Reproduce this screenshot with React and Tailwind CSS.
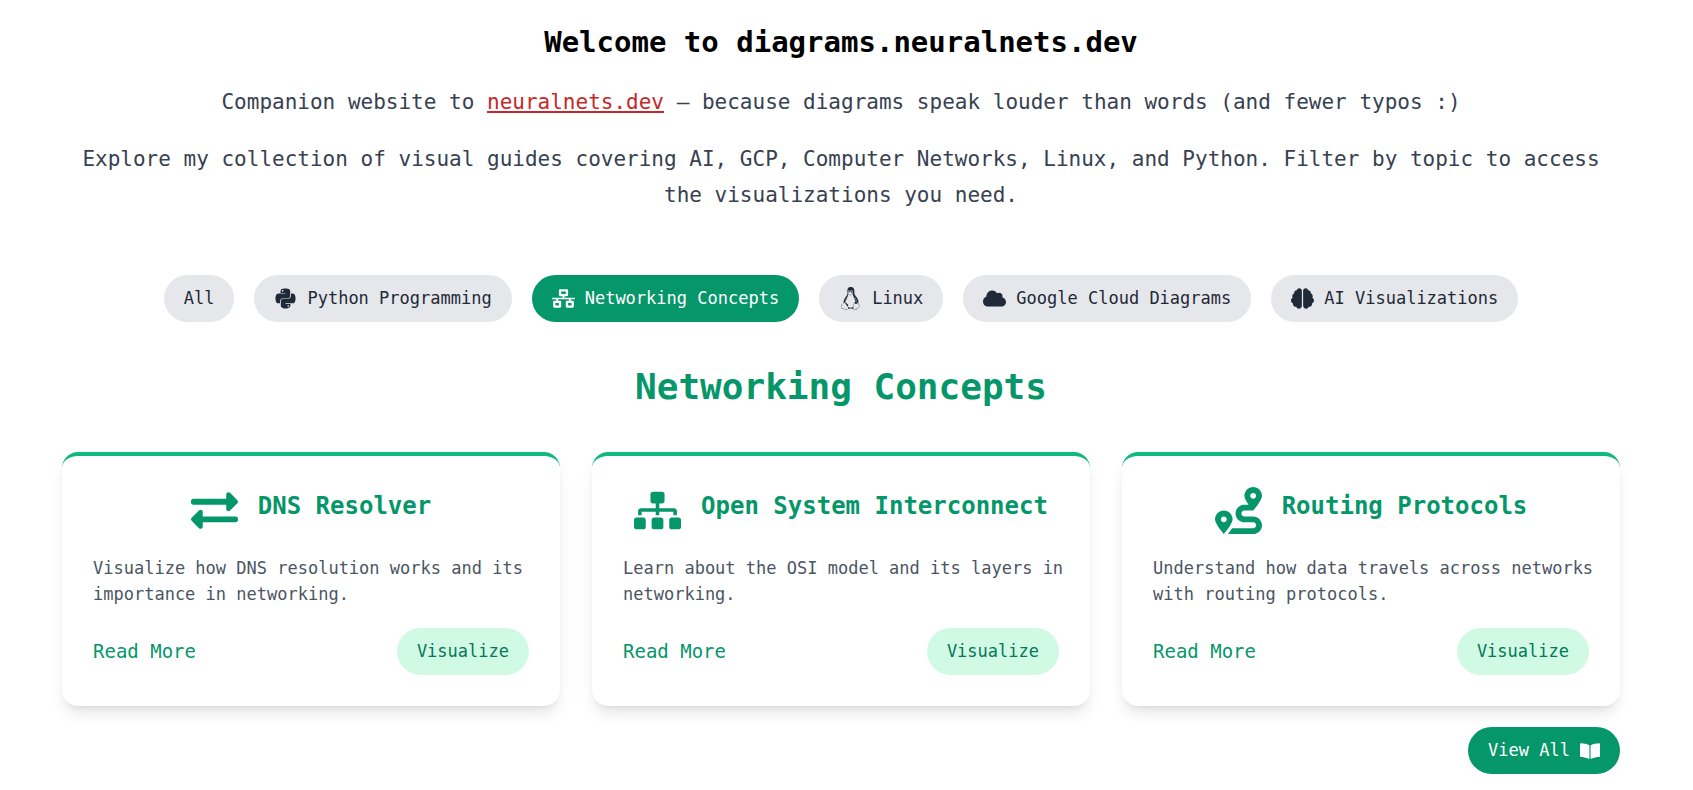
import {
  FaPython,
  FaNetworkWired,
  FaLinux,
  FaCloud,
  FaBrain,
  FaBookOpen,
  FaExchangeAlt,
  FaSitemap,
  FaRoute,
} from "react-icons/fa";

const filters = [
  { label: "All" },
  { label: "Python Programming", Icon: FaPython },
  { label: "Networking Concepts", Icon: FaNetworkWired, active: true },
  { label: "Linux", Icon: FaLinux },
  { label: "Google Cloud Diagrams", Icon: FaCloud },
  { label: "AI Visualizations", Icon: FaBrain },
];

const cards = [
  {
    title: "DNS Resolver",
    text: "Visualize how DNS resolution works and its importance in networking.",
    Icon: FaExchangeAlt,
  },
  {
    title: "Open System Interconnect",
    text: "Learn about the OSI model and its layers in networking.",
    Icon: FaSitemap,
  },
  {
    title: "Routing Protocols",
    text: "Understand how data travels across networks with routing protocols.",
    Icon: FaRoute,
  },
];

function FilterButton({ label, Icon, active }) {
  return (
    <button
      type="button"
      aria-pressed={Boolean(active)}
      className={`flex h-[47px] items-center gap-[10px] rounded-full px-5 text-[17px] ${
        active ? "bg-[#059669] text-white" : "bg-[#e5e7eb] text-[#1f2937]"
      }`}
    >
      {Icon && <Icon size={23} aria-hidden="true" />}
      {label}
    </button>
  );
}

function Card({ title, text, Icon }) {
  return (
    <article className="flex flex-col gap-[21px] rounded-2xl border-t-4 border-[#10b981] bg-white p-[31px] shadow-lg">
      <div className="flex items-center justify-center gap-5 text-[#059669]">
        <Icon size={47} className="shrink-0" aria-hidden="true" />
        <h3 className="mb-[10px] text-[24px] leading-9 font-bold whitespace-nowrap">{title}</h3>
      </div>
      <p className="-mr-4 text-[17px] leading-[26px] text-[#4b5563]">{text}</p>
      <div className="flex items-center justify-between">
        <a href="#read" className="text-[19px] text-[#059669]">
          Read More
        </a>
        <button type="button" className="h-[47px] rounded-full bg-[#d1fae5] px-5 text-[17px] text-[#047857]">
          Visualize
        </button>
      </div>
    </article>
  );
}

export default function App() {
  return (
    <div className="bg-white pt-[22px] pr-[73px] pb-4 pl-[62px] font-['DejaVu_Sans_Mono',monospace]">
      <header className="flex flex-col gap-[21px] text-center text-[21px] leading-9 text-[#374151]">
        <h1 className="text-[29px] leading-[41px] font-bold text-black">Welcome to diagrams.neuralnets.dev</h1>
        <p>
          Companion website to{" "}
          <a href="#home" className="text-[#c52828] underline">
            neuralnets.dev
          </a>{" "}
          — because diagrams speak louder than words (and fewer typos :)
        </p>
        <p>
          Explore my collection of visual guides covering AI, GCP, Computer Networks, Linux, and Python. Filter by
          topic to access the visualizations you need.
        </p>
      </header>

      <nav aria-label="Topics" className="mt-[62px] flex flex-wrap justify-center gap-5">
        {filters.map((f) => (
          <FilterButton key={f.label} {...f} />
        ))}
      </nav>

      <main>
        <h2 className="my-[42px] text-center text-[36px] leading-[46px] font-bold text-[#059669]">
          Networking Concepts
        </h2>
        <div className="grid grid-cols-3 gap-8">
          {cards.map((c) => (
            <Card key={c.title} {...c} />
          ))}
        </div>
        <div className="mt-[21px] flex justify-end">
          <button
            type="button"
            className="flex h-[47px] items-center gap-[10px] rounded-full bg-[#059669] px-5 text-[17px] text-white"
          >
            View All
            <FaBookOpen size={20} aria-hidden="true" />
          </button>
        </div>
      </main>
    </div>
  );
}
